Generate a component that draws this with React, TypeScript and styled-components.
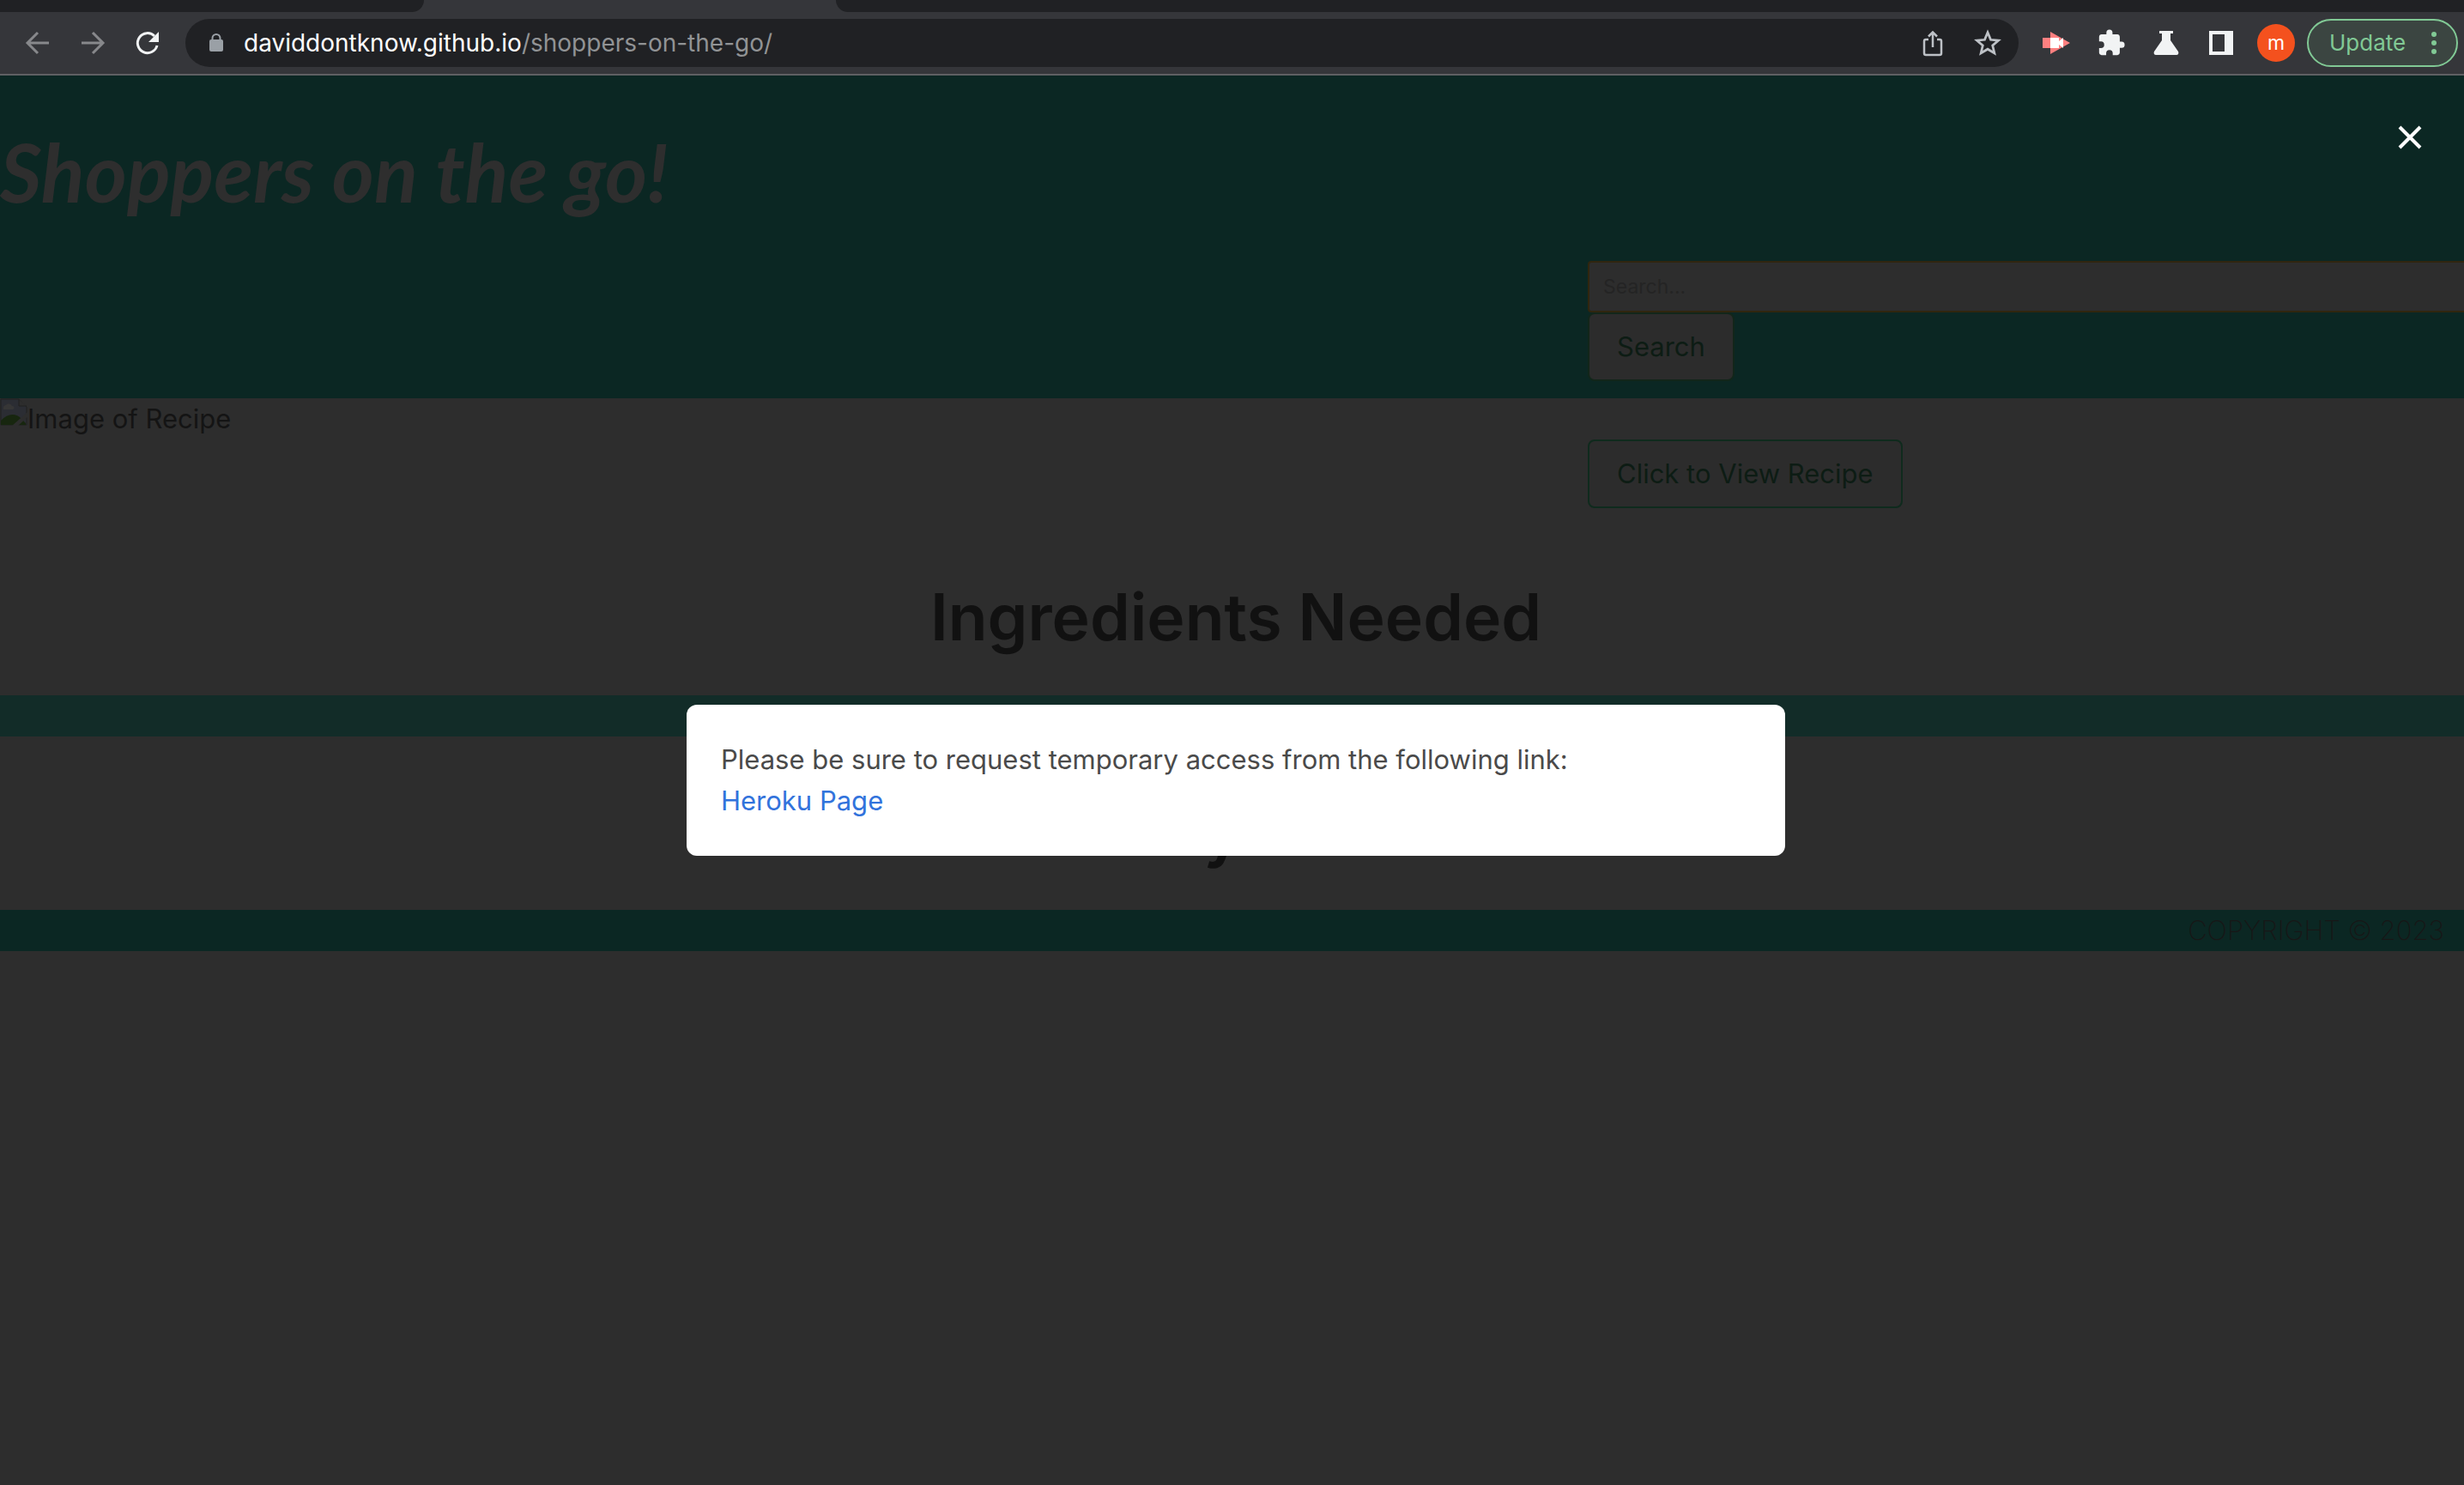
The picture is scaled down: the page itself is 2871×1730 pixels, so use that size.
import React from "react";
import styled, { createGlobalStyle } from "styled-components";

const Global = createGlobalStyle`
  * { box-sizing: border-box; }
  html { overflow: hidden; }
  body {
    margin: 0;
    background: #2d2d2d;
    color: #141414;
    font: 400 31px/48px Inter, "Liberation Sans", sans-serif;
    overflow: hidden;
  }
  h1, h2, p { margin: 0; }
  button, input { font: inherit; margin: 0; }
`;

const Tabs = styled.div`
  display: flex;
  height: 14px;
  background: #35363a;
`;
const TabGap = styled.div<{ $side: "left" | "right" }>`
  background: #202124;
  ${(p) =>
    p.$side === "left"
      ? "width: 494px; border-bottom-right-radius: 14px;"
      : "flex: 1; margin-left: 480px; border-bottom-left-radius: 14px;"}
`;
const Toolbar = styled.div`
  display: flex;
  align-items: center;
  height: 74px;
  padding: 0 7px 0 26px;
  background: #35363a;
  border-bottom: 2px solid #5f6063;
`;
const NavButtons = styled.div`
  display: flex;
  gap: 28px;
  margin-right: 26px;
`;
const IconButton = styled.button`
  display: flex;
  align-items: center;
  justify-content: center;
  width: 36px;
  height: 36px;
  padding: 0;
  border: 0;
  background: none;
`;
const AddressBar = styled.div`
  flex: 1;
  display: flex;
  align-items: center;
  height: 56px;
  padding: 0 18px 0 26px;
  border-radius: 28px;
  background: #202124;
  gap: 22px;
`;
const Address = styled.p`
  flex: 1;
  font-size: 28px;
  color: #919395;
  span { color: #fff; }
`;
const BarActions = styled.div`
  display: flex;
  gap: 28px;
`;
const Extensions = styled.div`
  display: flex;
  align-items: center;
  gap: 28px;
  margin: 0 24px 0 26px;
`;
const Avatar = styled.button`
  width: 44px;
  height: 44px;
  margin-right: 14px;
  padding: 0;
  border: 0;
  border-radius: 50%;
  background: #f4511e;
  color: #fff;
  font-size: 23px;
  line-height: 44px;
`;
const Update = styled.button`
  display: flex;
  align-items: center;
  justify-content: space-between;
  width: 176px;
  height: 56px;
  padding: 0 22px 0 24px;
  border: 2px solid #81c995;
  border-radius: 28px;
  background: #3b4541;
  color: #81c995;
  font-size: 26px;
`;

const Page = styled.div`
  position: relative;
  margin-right: -9px;
`;
const Header = styled.header`
  background: #0b2723;
  padding: 58px 0 20px;
`;
const SiteTitle = styled.h1`
  color: #2e2e2e;
  font: italic 700 94px/108px Lato, "Open Sans", sans-serif;
  margin-bottom: 50px;
`;
const SearchForm = styled.form`
  display: flex;
  flex-direction: column;
  align-items: flex-start;
  margin-left: 1850px;
`;
const SearchInput = styled.input`
  width: 100%;
  height: 60px;
  padding: 0 16px;
  border: 2px solid #30260f;
  border-radius: 4px;
  background: #2d2d2d;
  color: #141414;
  font-size: 23px;
  &::placeholder { color: #242424; opacity: 1; }
`;
const Button = styled.button<{ $outlined?: boolean }>`
  height: 80px;
  padding: 0 32px;
  border: 2px solid ${(p) => (p.$outlined ? "#0f2a1d" : "#12261a")};
  border-radius: 8px;
  background: #2c2c2c;
  color: #0d1c14;
`;
const RecipeRow = styled.div`
  display: grid;
  grid-template-columns: 1850px auto 1fr;
  align-items: start;
  height: 144px;
  ${Button} { margin-top: 48px; }
`;
const MissingImage = styled.div`
  display: flex;
`;
const Section = styled.section`
  padding: 66px 0 46px;
  text-align: center;
`;
const SectionTitle = styled.h2`
  font-size: 75px;
  line-height: 90px;
  font-weight: 600;
  color: #111;
`;
const Band = styled.div`
  height: 48px;
  background: #122c28;
`;
const Footer = styled.footer`
  background: #0b2723;
  color: #171717;
  padding-right: 32px;
  text-align: right;
  font-weight: 200;
`;
const Dialog = styled.div`
  position: absolute;
  top: 733px;
  left: 50%;
  width: 1280px;
  margin-left: -640px;
  padding: 40px;
  border-radius: 12px;
  background: #fff;
  color: #4a4a4a;
  a { color: #3273dc; text-decoration: none; }
`;
const Close = styled(IconButton)`
  position: absolute;
  top: 54px;
  right: 54px;
`;

const stroke = (color: string, width = 3) => ({
  fill: "none",
  stroke: color,
  strokeWidth: width,
});

export default function App() {
  return (
    <>
      <Global />
      <Tabs>
        <TabGap $side="left" />
        <TabGap $side="right" />
      </Tabs>
      <Toolbar>
        <NavButtons>
          <IconButton aria-label="Back">
            <svg width="36" height="36" {...stroke("#87888b")}><path d="M31 18H7M18 6L6 18l12 12" /></svg>
          </IconButton>
          <IconButton aria-label="Forward">
            <svg width="36" height="36" {...stroke("#87888b")}><path d="M5 18h24M18 6l12 12-12 12" /></svg>
          </IconButton>
          <IconButton aria-label="Reload">
            <svg width="36" height="36">
              <path d="M29 21A11.5 11.5 0 1 1 26 10" {...stroke("#f1f3f4")} />
              <path d="M31 5v12H19z" fill="#f1f3f4" />
            </svg>
          </IconButton>
        </NavButtons>
        <AddressBar>
          <svg width="20" height="24">
            <rect x="2" y="8" width="16" height="14" rx="2" fill="#9aa0a6" />
            <path d="M5.500 9V6.500a4.500 4.500 0 0 1 9 0V9" {...stroke("#9aa0a6", 2)} />
          </svg>
          <Address><span>daviddontknow.github.io</span>/shoppers-on-the-go/</Address>
          <BarActions>
            <IconButton aria-label="Share">
              <svg width="36" height="36" {...stroke("#bdc1c6", 2.5)}>
                <path d="M13 14h-3a2 2 0 0 0-2 2v14a2 2 0 0 0 2 2h16a2 2 0 0 0 2-2V16a2 2 0 0 0-2-2h-3M18 23V5M13 10.500l5-5 5 5" />
              </svg>
            </IconButton>
            <IconButton aria-label="Bookmark">
              <svg width="36" height="36" viewBox="1 1 34 34" {...stroke("#bdc1c6", 2.6)}>
                <path d="M18 6.500l3.300 8 8.600.7-6.500 5.700 2 8.400L18 24.800l-7.400 4.500 2-8.400-6.500-5.700 8.600-.7z" />
              </svg>
            </IconButton>
          </BarActions>
        </AddressBar>
        <Extensions>
          <IconButton aria-label="Screen recorder">
            <svg width="36" height="36">
              <path d="M2 12h9V5l23 13-23 13v-7H2z" fill="#ff8080" />
              <path d="M11 12h10v4l5-4v12l-5-4v4H11z" fill="#fff" />
            </svg>
          </IconButton>
          <IconButton aria-label="Extensions">
            <svg width="34" height="34" viewBox="0 0 24 24" fill="#f1f3f4">
              <path d="M20.500 11H19V7c0-1.100-.9-2-2-2h-4V3.500a2.500 2.500 0 0 0-5 0V5H4c-1.100 0-2 .9-2 2v3.800h1.500a2.700 2.700 0 0 1 0 5.400H2V20c0 1.100.9 2 2 2h3.800v-1.500a2.700 2.700 0 0 1 5.400 0V22H17c1.100 0 2-.9 2-2v-4h1.500a2.500 2.500 0 0 0 0-5z" />
            </svg>
          </IconButton>
          <IconButton aria-label="Experiments">
            <svg width="36" height="36" fill="#f1f3f4">
              <path d="M10 4h16v3h-3v8l9 13c1 2 0 4-2 4H6c-2 0-3-2-2-4l9-13V7h-3z" />
            </svg>
          </IconButton>
          <IconButton aria-label="Side panel">
            <svg width="36" height="36"><path d="M4 4h28v28H4zM8 8v20h14V8z" fill="#f1f3f4" fillRule="evenodd" /></svg>
          </IconButton>
        </Extensions>
        <Avatar aria-label="Profile">m</Avatar>
        <Update>
          Update
          <svg width="8" height="28" fill="#81c995">
            <circle cx="4" cy="4" r="3" /><circle cx="4" cy="14" r="3" /><circle cx="4" cy="24" r="3" />
          </svg>
        </Update>
      </Toolbar>
      <Page>
        <Header>
          <SiteTitle>Shoppers on the go!</SiteTitle>
          <SearchForm onSubmit={(e) => e.preventDefault()}>
            <SearchInput aria-label="Search" placeholder="Search..." />
            <Button>Search</Button>
          </SearchForm>
        </Header>
        <main>
          <RecipeRow>
            <MissingImage>
              <svg width="32" height="32">
                <path d="M1 1h21l9 9v21H1z" fill="#2b2d33" stroke="#212121" />
                <path d="M4 12a3 3 0 0 1 3-4 4 4 0 0 1 7 1 2 2 0 0 1 1 4H4z" fill="#363636" />
                <path d="M1 31v-5c8-9 18-9 24-2l5 5v2z" fill="#17260f" />
                <path d="M14 32L32 16v6L21 32z" fill="#2d2d2d" />
                <path d="M22 1v8h9" fill="#2d2d2d" stroke="#212121" />
              </svg>
              Image of Recipe
            </MissingImage>
            <Button $outlined>Click to View Recipe</Button>
          </RecipeRow>
          <Section><SectionTitle>Ingredients Needed</SectionTitle></Section>
          <Band />
          <Section><SectionTitle>Nearby Stores</SectionTitle></Section>
        </main>
        <Footer>COPYRIGHT © 2023</Footer>
        <Dialog role="dialog" aria-label="Access notice">
          <p>Please be sure to request temporary access from the following link:</p>
          <a href="#heroku">Heroku Page</a>
        </Dialog>
        <Close aria-label="Close">
          <svg width="36" height="36" {...stroke("#fff", 4)}><path d="M6 6l24 24M30 6L6 30" /></svg>
        </Close>
      </Page>
    </>
  );
}
